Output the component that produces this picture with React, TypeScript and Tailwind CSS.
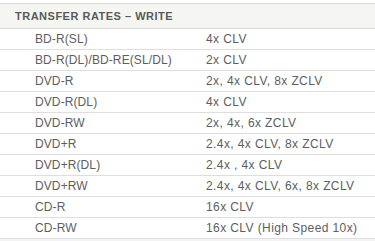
const rows: [string, string][] = [
  ["BD-R(SL)", "4x CLV"],
  ["BD-R(DL)/BD-RE(SL/DL)", "2x CLV"],
  ["DVD-R", "2x, 4x CLV, 8x ZCLV"],
  ["DVD-R(DL)", "4x CLV"],
  ["DVD-RW", "2x, 4x, 6x ZCLV"],
  ["DVD+R", "2.4x, 4x CLV, 8x ZCLV"],
  ["DVD+R(DL)", "2.4x , 4x CLV"],
  ["DVD+RW", "2.4x, 4x CLV, 6x, 8x ZCLV"],
  ["CD-R", "16x CLV"],
  ["CD-RW", "16x CLV (High Speed 10x)"],
];

export default function App() {
  return (
    <div className="w-[375px] h-[241px] bg-[#f3f3f3] font-['Liberation_Sans',Arial,sans-serif] text-[#5e5e5e]">
      <div className="bg-white pt-[3px]">
        <div className="border-y border-[#dcdcdc] bg-[#f5f6f2] h-[26px] flex items-center pl-[15px]">
          <span className="text-[11px] font-bold uppercase tracking-[0.5px] text-[#5a5a5a]">
            Transfer Rates – Write
          </span>
        </div>
        {rows.map(([media, speed]) => (
          <div
            key={media}
            className="flex h-[21px] items-center border-b border-[#dedede] text-[12px] leading-none"
          >
            <div className="w-[206px] pl-[35px] tracking-[0.1px]">{media}</div>
            <div className="flex-1 tracking-[0.4px]">{speed}</div>
          </div>
        ))}
      </div>
    </div>
  );
}
